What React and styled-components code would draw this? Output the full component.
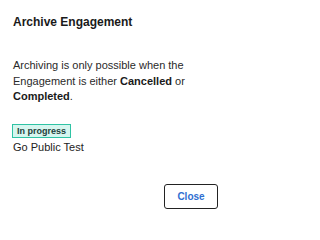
import React from 'react';
import styled, { createGlobalStyle } from 'styled-components';

const GlobalStyle = createGlobalStyle`
  body {
    margin: 0;
    background: #fff;
    font-family: "Liberation Sans", Arial, sans-serif;
    color: #1f1f1f;
  }
`;

const Dialog = styled.div`
  box-sizing: border-box;
  width: 229px;
  height: 218px;
  padding: 14px 11px 9px 13px;
  display: flex;
  flex-direction: column;
`;

const Title = styled.h2`
  margin: 0;
  font-size: 12px;
  line-height: 16px;
  font-weight: 700;
  color: #1a1a1a;
`;

const Body = styled.p`
  margin: 28px 0 0;
  font-size: 11px;
  line-height: 15.5px;
  color: #2a2a2a;

  b {
    font-weight: 700;
    color: #1a1a1a;
  }
`;

const Item = styled.div`
  margin-top: 19px;
  display: flex;
  flex-direction: column;
  align-items: flex-start;
`;

const Badge = styled.span`
  box-sizing: border-box;
  height: 14px;
  padding: 0 4px;
  margin-left: -1px;
  display: inline-flex;
  align-items: center;
  font-size: 9px;
  font-weight: 700;
  color: #23403a;
  background: #d6f6ef;
  border: 1px solid #2fc3a4;
`;

const ItemName = styled.div`
  margin-top: 2px;
  font-size: 11px;
  line-height: 14px;
  color: #222;
`;

const Footer = styled.div`
  margin-top: auto;
  display: flex;
  justify-content: flex-end;
`;

const Button = styled.button`
  box-sizing: border-box;
  width: 54px;
  height: 25px;
  padding: 0;
  border: 1px solid #222;
  border-radius: 3px;
  background: #fff;
  color: #2f6fd1;
  font-family: "Liberation Sans", Arial, sans-serif;
  font-size: 10px;
  font-weight: 700;
  cursor: pointer;
`;

const App = () => (
  <>
    <GlobalStyle />
    <Dialog>
      <Title>Archive Engagement</Title>
      <Body>
        Archiving is only possible when the Engagement is either <b>Cancelled</b> or <b>Completed</b>.
      </Body>
      <Item>
        <Badge>In progress</Badge>
        <ItemName>Go Public Test</ItemName>
      </Item>
      <Footer>
        <Button>Close</Button>
      </Footer>
    </Dialog>
  </>
);

export default App;
